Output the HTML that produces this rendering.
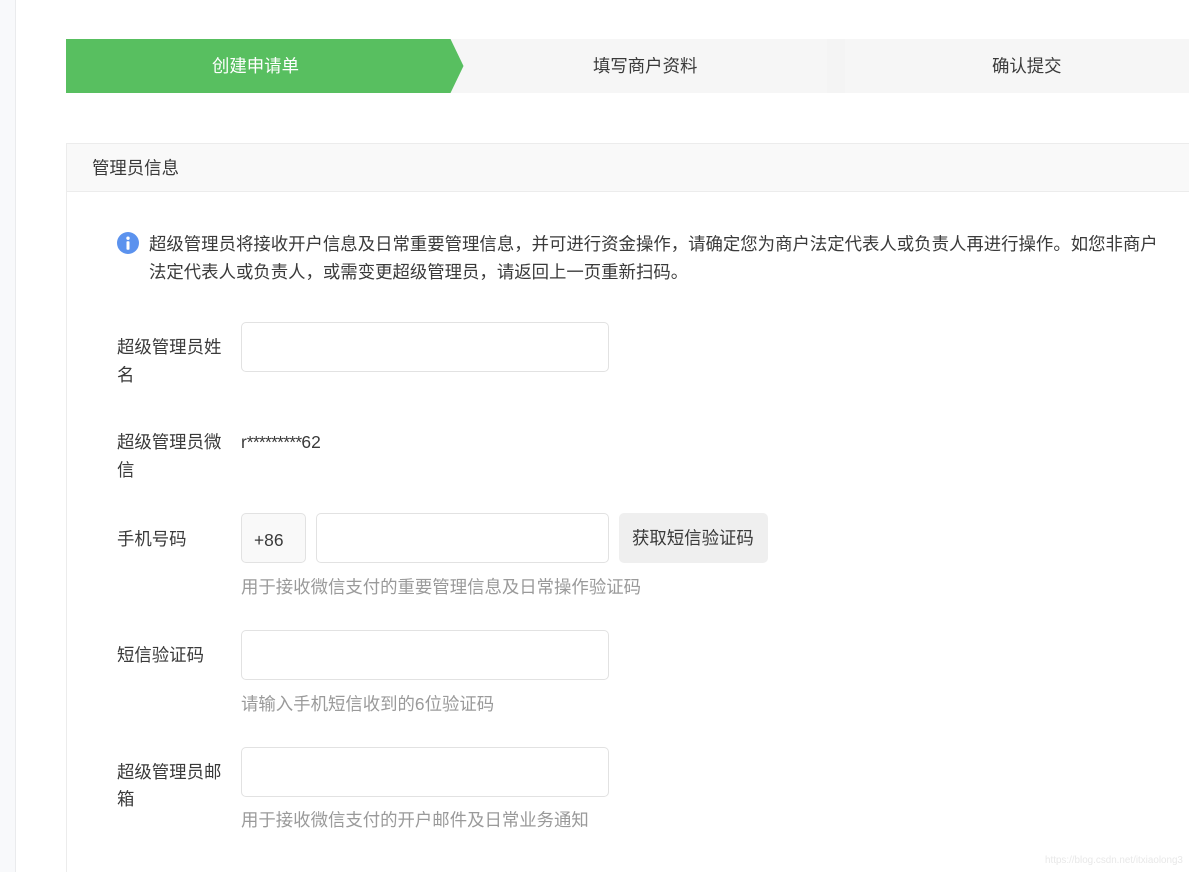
<!DOCTYPE html>
<html lang="zh">
<head>
<meta charset="utf-8">
<style>
html,body{margin:0;padding:0;background:#fff;width:1189px;height:872px;overflow:hidden;}
body{position:relative;font-family:"Liberation Sans","Noto Sans CJK SC",sans-serif;font-size:17.4px;color:#3a3a3a;}
#p{position:absolute;left:0;top:0;width:1189px;height:872px;overflow:hidden;filter:blur(0.35px);}
.a{position:absolute;white-space:nowrap;line-height:28px;}
.box{position:absolute;box-sizing:border-box;border:1px solid #e2e2e2;border-radius:5px;background:#fff;}
.tip{color:#9a9a9a;}
</style>
</head>
<body>
<div id="p">
<div style="position:absolute;left:0;top:0;width:15px;height:872px;background:#f8f9fb;border-right:1px solid #eaebed;"></div>

<div style="position:absolute;left:66px;top:39px;width:1123px;height:54px;background:#f6f6f6;"></div>
<div style="position:absolute;left:827px;top:39px;width:18px;height:54px;background:#f4f4f4;"></div>
<svg style="position:absolute;left:66px;top:38px;" width="400" height="56"><polygon points="0,1 384.500,1 397.500,28 384.500,55 0,55" fill="#58bf60"/></svg>
<div class="a" style="left:212px;top:52px;color:#fff;">创建申请单</div>
<div class="a" style="left:593px;top:52px;">填写商户资料</div>
<div class="a" style="left:992px;top:52px;">确认提交</div>

<div style="position:absolute;box-sizing:border-box;left:66px;top:143px;width:1130px;height:729px;border:1px solid #ececec;border-bottom:0;"></div>
<div style="position:absolute;box-sizing:border-box;left:67px;top:144px;width:1122px;height:48px;background:#f9f9f9;border-bottom:1px solid #ececec;"></div>
<div class="a" style="left:92px;top:154px;">管理员信息</div>

<svg style="position:absolute;left:117px;top:232px;" width="22" height="22" viewBox="0 0 22 22"><circle cx="11" cy="11" r="11" fill="#5b92ee"/><circle cx="11" cy="6.200" r="1.700" fill="#fff"/><rect x="9.500" y="9.200" width="3" height="8.500" rx="0.800" fill="#fff"/></svg>
<div class="a" style="left:149px;top:230px;">超级管理员将接收开户信息及日常重要管理信息&#xFF0C;并可进行资金操作&#xFF0C;请确定您为商户法定代表人或负责人再进行操作。如您非商户</div>
<div class="a" style="left:149px;top:258px;">法定代表人或负责人&#xFF0C;或需变更超级管理员&#xFF0C;请返回上一页重新扫码。</div>

<div class="a" style="left:117px;top:333px;">超级管理员姓</div>
<div class="a" style="left:117px;top:361px;">名</div>
<div class="box" style="left:241px;top:322px;width:368px;height:49.500px;"></div>

<div class="a" style="left:117px;top:428px;">超级管理员微</div>
<div class="a" style="left:117px;top:456px;">信</div>
<div class="a" style="left:241px;top:428px;">r<span style="letter-spacing:-0.7px;">*********</span>62</div>

<div class="a" style="left:117px;top:525px;">手机号码</div>
<div class="box" style="left:241px;top:513px;width:65px;height:49.500px;background:#f9f9f9;"></div>
<div class="a" style="left:254px;top:526px;">+86</div>
<div class="box" style="left:316px;top:513px;width:293px;height:49.500px;"></div>
<div style="position:absolute;left:619px;top:513px;width:149px;height:49.500px;background:#efefef;border-radius:5px;"></div>
<div class="a" style="left:632px;top:524px;">获取短信验证码</div>
<div class="a tip" style="left:241px;top:573px;">用于接收微信支付的重要管理信息及日常操作验证码</div>

<div class="a" style="left:117px;top:641px;">短信验证码</div>
<div class="box" style="left:241px;top:630px;width:368px;height:49.500px;"></div>
<div class="a tip" style="left:241px;top:690px;">请输入手机短信收到的6位验证码</div>

<div class="a" style="left:117px;top:758px;">超级管理员邮</div>
<div class="a" style="left:117px;top:785px;">箱</div>
<div class="box" style="left:241px;top:747px;width:368px;height:49.500px;"></div>
<div class="a tip" style="left:241px;top:806px;">用于接收微信支付的开户邮件及日常业务通知</div>

<div class="a" style="left:1045px;top:847px;font-size:9.850px;color:#e8e8e8;">https://blog.csdn.net/itxiaolong3</div>
</div>
</body>
</html>
